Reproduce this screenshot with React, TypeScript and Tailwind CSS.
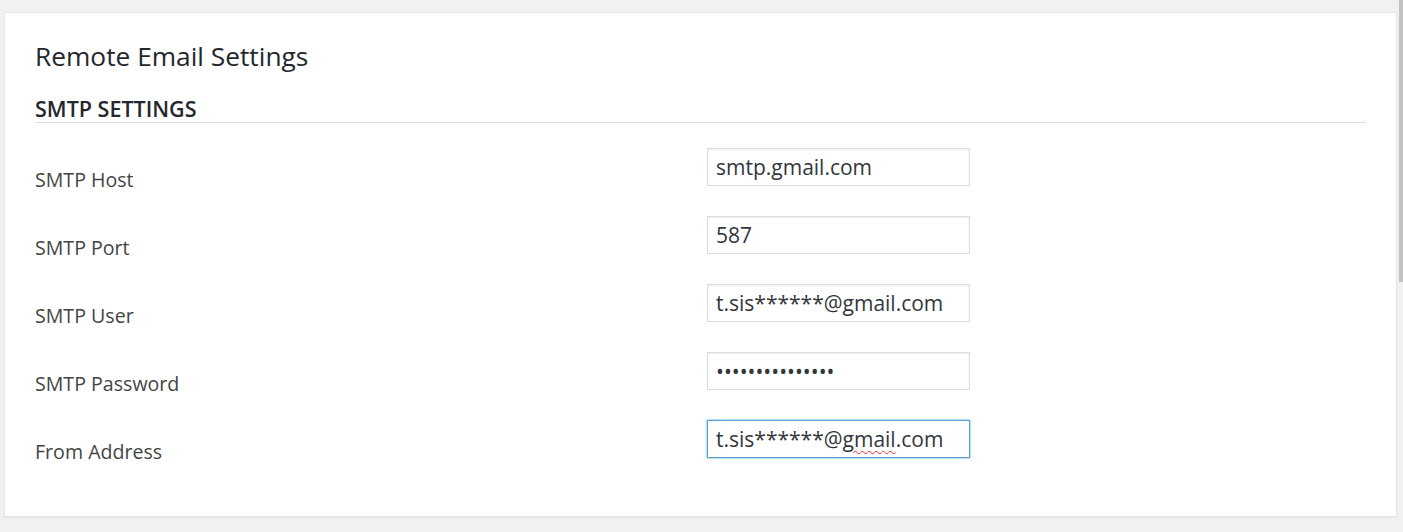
import React from 'react';

const font = { fontFamily: '"Open Sans", "Noto Sans", sans-serif' };

interface Field {
  label: string;
  value: React.ReactNode;
  focused?: boolean;
}

const fields: Field[] = [
  { label: 'SMTP Host', value: 'smtp.gmail.com' },
  { label: 'SMTP Port', value: '587' },
  { label: 'SMTP User', value: 't.sis******@gmail.com' },
  { label: 'SMTP Password', value: '•••••••••••••••' },
  {
    label: 'From Address',
    focused: true,
    value: (
      <>
        t.sis******@
        <span className="underline decoration-wavy decoration-[#e33] decoration-1 underline-offset-[3px]">gmail</span>
        .com
      </>
    ),
  },
];

function FieldRow({ field }: { field: Field }) {
  return (
    <div className="flex items-start h-[68px]">
      <div className="w-[672px] pt-[43px] text-[19.6px] leading-[28px] text-[#444444]">{field.label}</div>
      <div
        className={
          'mt-[25px] w-[263px] h-[38px] px-[8px] pt-[2px] flex items-center text-[21px] text-[#32373c] bg-white border ' +
          (field.focused
            ? 'border-[#5b9dd9] shadow-[0_0_2px_rgba(30,140,190,0.8)]'
            : 'border-[#dddddd] shadow-[inset_0_1px_2px_rgba(0,0,0,0.07)]')
        }
      >
        <span className="whitespace-nowrap">{field.value}</span>
      </div>
    </div>
  );
}

export default function App() {
  return (
    <div className="w-full h-[532px] bg-[#f1f1f1] flex overflow-hidden" style={font}>
      <div className="flex-1 pl-[4px] pr-[2px] pt-[12px]">
        <div className="bg-white border border-[#e5e5e5] shadow-[0_1px_1px_rgba(0,0,0,0.04)] px-[30px] pt-[27px] pb-[53px]">
          <h2 className="text-[26.3px] leading-[32px] font-medium text-[#23282d]">Remote Email Settings</h2>
          <h3 className="mt-[23px] text-[21.5px] leading-[27px] font-semibold text-[#23282d] border-b border-[#dddddd]">
            SMTP SETTINGS
          </h3>
          {fields.map((f) => (
            <FieldRow key={f.label} field={f} />
          ))}
        </div>
      </div>
      <div className="w-[4px] flex flex-col">
        <div className="h-[282px] bg-[#c1c1c1]" />
      </div>
    </div>
  );
}
